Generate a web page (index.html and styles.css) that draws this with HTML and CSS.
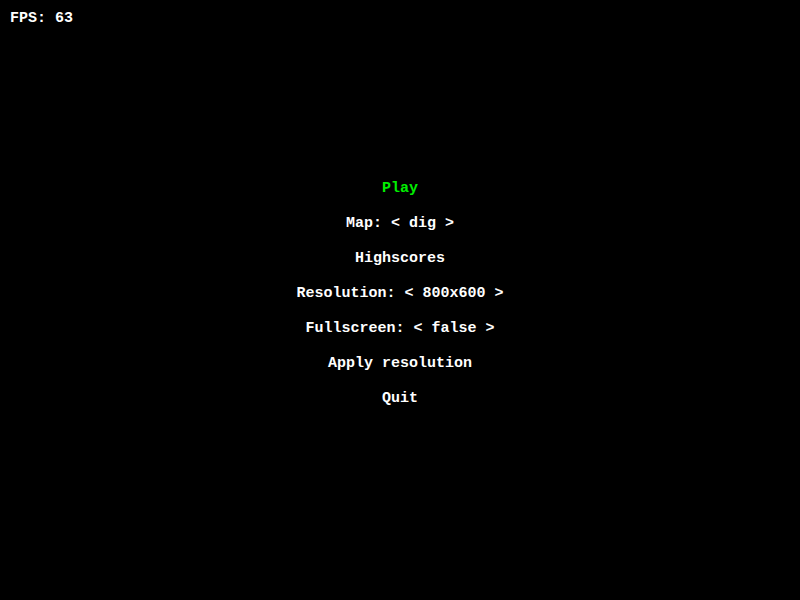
FILE: index.html
```html
<!DOCTYPE html>
<html>
<head>
<meta charset="utf-8">
<link rel="stylesheet" href="styles.css">
</head>
<body>
<div class="screen">
  <div class="fps">FPS: 63</div>
  <ul class="menu">
    <li class="item active">Play</li>
    <li class="item">Map: &lt; dig &gt;</li>
    <li class="item">Highscores</li>
    <li class="item">Resolution: &lt; 800x600 &gt;</li>
    <li class="item">Fullscreen: &lt; false &gt;</li>
    <li class="item">Apply resolution</li>
    <li class="item">Quit</li>
  </ul>
</div>
</body>
</html>
```

FILE: styles.css
```css
html, body {
  margin: 0;
  padding: 0;
  background: #000;
}
.screen {
  width: 800px;
  height: 600px;
  background: #000;
  color: #fff;
  font-family: "Liberation Mono", "Courier New", monospace;
  font-weight: bold;
  font-size: 15px;
  overflow: hidden;
}
.fps {
  padding: 10px 10px 0 10px;
  line-height: 18px;
  white-space: pre;
}
.menu {
  list-style: none;
  margin: 143px 0 0 0;
  padding: 0;
  display: flex;
  flex-direction: column;
  align-items: center;
}
.item {
  line-height: 35px;
  white-space: pre;
}
.active {
  color: #00ee00;
}
```
